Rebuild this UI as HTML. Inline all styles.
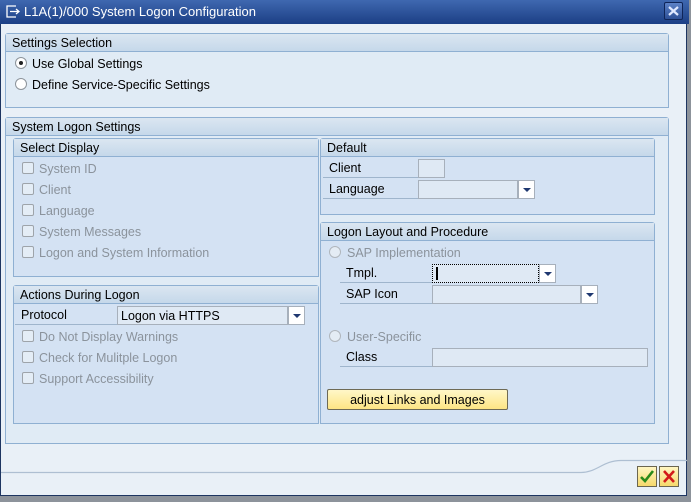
<!DOCTYPE html>
<html><head><meta charset="utf-8"><style>
*{margin:0;padding:0;box-sizing:border-box}
body{width:691px;height:502px;background:#8d939b;position:relative;overflow:hidden;font-family:"Liberation Sans",sans-serif;font-size:12.5px;color:#000}
.a{position:absolute}
#dlg{left:0;top:0;width:687px;height:496px;background:#e9f0f7;border:1px solid #1d3561;border-top:none}
#title{left:0;top:0;width:689px;height:24px;background:linear-gradient(#3f68b0,#1c3f85);color:#fff;font-size:13px;line-height:24px;padding-left:24px}
.grp{border:1px solid #8fb0d2;border-radius:3px 3px 0 0;background:#dde8f3}
.hd{left:0;top:0;right:0;height:18px;background:linear-gradient(#dbe6f1,#c5d8ea);border-bottom:1px solid #8fb0d2;line-height:18px;padding-left:6px;font-size:12.5px}
.inner{background:#d4e2f3}
.t{white-space:nowrap;line-height:14px}
.dis{color:#8b939c}
.cb{width:12px;height:12px;border:1px solid #9ea4aa;border-radius:2px;background:#e4edf6}
.rb{width:12px;height:12px;border:1px solid #8d949b;border-radius:50%;background:#fff}
.lbl{border-bottom:1px solid #9fb5cc;height:20px;line-height:21px;padding-left:6px}
.in{height:19px;border:1px solid #a7b0bb;background:#dfe9f4}
.dd{width:17px;height:19px;border:1px solid #a7b0bb;background:#fff}
.dd:after{content:"";position:absolute;left:4px;top:7px;border-left:4px solid transparent;border-right:4px solid transparent;border-top:4px solid #1f3870}
</style></head><body>
<div id="dlg" class="a"></div>
<div id="title" class="a">L1A(1)/000 System Logon Configuration</div>
<svg class="a" style="left:6px;top:5px" width="14" height="13"><path d="M10 1H1v11h9" fill="none" stroke="#fff" stroke-width="1.3"/><path d="M4 6.5h9M10 4l3 2.5-3 2.5" fill="none" stroke="#fff" stroke-width="1.3"/></svg>
<div class="a" style="left:664px;top:2px;width:19px;height:18px;border:1px solid #0f2558;border-radius:2px;background:linear-gradient(#5c82c7,#2c4f96)"><svg width="17" height="16"><path d="M4 4l9 8M13 4l-9 8" stroke="#dfe8ff" stroke-width="2.2"/></svg></div>

<div class="a grp" style="left:5px;top:33px;width:664px;height:75px;background:#e0ebf5"><div class="a hd">Settings Selection</div></div>
<div class="a rb" style="left:15px;top:57px"><div class="a" style="left:3px;top:3px;width:4px;height:4px;border-radius:50%;background:#222"></div></div>
<div class="a t" style="left:32px;top:57px">Use Global Settings</div>
<div class="a rb" style="left:15px;top:78px"></div>
<div class="a t" style="left:32px;top:78px">Define Service-Specific Settings</div>

<div class="a grp" style="left:5px;top:117px;width:664px;height:327px;background:#e0ebf5"><div class="a hd">System Logon Settings</div></div>

<div class="a grp inner" style="left:13px;top:138px;width:306px;height:139px"><div class="a hd">Select Display</div></div>
<div class="a cb" style="left:22px;top:162px"></div><div class="a t dis" style="left:39px;top:162px">System ID</div>
<div class="a cb" style="left:22px;top:183px"></div><div class="a t dis" style="left:39px;top:183px">Client</div>
<div class="a cb" style="left:22px;top:204px"></div><div class="a t dis" style="left:39px;top:204px">Language</div>
<div class="a cb" style="left:22px;top:225px"></div><div class="a t dis" style="left:39px;top:225px">System Messages</div>
<div class="a cb" style="left:22px;top:246px"></div><div class="a t dis" style="left:39px;top:246px">Logon and System Information</div>

<div class="a grp inner" style="left:320px;top:138px;width:335px;height:77px"><div class="a hd">Default</div></div>
<div class="a lbl" style="left:323px;top:158px;width:95px">Client</div>
<div class="a in" style="left:418px;top:159px;width:27px"></div>
<div class="a lbl" style="left:323px;top:179px;width:95px">Language</div>
<div class="a in" style="left:418px;top:180px;width:100px"></div>
<div class="a dd" style="left:518px;top:180px"></div>

<div class="a grp inner" style="left:13px;top:285px;width:306px;height:139px"><div class="a hd">Actions During Logon</div></div>
<div class="a lbl" style="left:15px;top:305px;width:102px">Protocol</div>
<div class="a in" style="left:117px;top:306px;width:171px;line-height:18px;padding-left:3px">Logon via HTTPS</div>
<div class="a dd" style="left:288px;top:306px"></div>
<div class="a cb" style="left:22px;top:330px"></div><div class="a t dis" style="left:39px;top:330px">Do Not Display Warnings</div>
<div class="a cb" style="left:22px;top:351px"></div><div class="a t dis" style="left:39px;top:351px">Check for Mulitple Logon</div>
<div class="a cb" style="left:22px;top:372px"></div><div class="a t dis" style="left:39px;top:372px">Support Accessibility</div>

<div class="a grp inner" style="left:320px;top:222px;width:335px;height:202px"><div class="a hd">Logon Layout and Procedure</div></div>
<div class="a rb" style="left:329px;top:246px;border-color:#b0b6bc;background:#e4ecf4"></div>
<div class="a t dis" style="left:347px;top:246px">SAP Implementation</div>
<div class="a lbl" style="left:340px;top:263px;width:92px">Tmpl.</div>
<div class="a in" style="left:432px;top:264px;width:107px;border:1px dotted #000"><div class="a" style="left:3px;top:2px;width:2px;height:13px;background:#000"></div></div>
<div class="a dd" style="left:539px;top:264px"></div>
<div class="a lbl" style="left:340px;top:284px;width:92px">SAP Icon</div>
<div class="a in" style="left:432px;top:285px;width:149px"></div>
<div class="a dd" style="left:581px;top:285px"></div>
<div class="a rb" style="left:329px;top:330px;border-color:#b0b6bc;background:#e4ecf4"></div>
<div class="a t dis" style="left:347px;top:330px">User-Specific</div>
<div class="a lbl" style="left:340px;top:347px;width:92px">Class</div>
<div class="a in" style="left:432px;top:348px;width:216px"></div>
<div class="a" style="left:327px;top:389px;width:181px;height:21px;border:1px solid #6e6a55;border-radius:2px;background:linear-gradient(#fff7c8,#fde584);text-align:center;line-height:20px">adjust Links and Images</div>

<svg class="a" style="left:1px;top:455px" width="686" height="20"><path d="M0 17.5H580 C596 17.5 602 5.5 620 5.5H686" fill="none" stroke="#aebfd2" stroke-width="1.2"/></svg>
<div class="a" style="left:637px;top:466px;width:20px;height:21px;border:1px solid #6b6650;background:linear-gradient(#fff6c2,#f6d96c)"><svg width="18" height="19"><path d="M3 10l4 4 8-10" fill="none" stroke="#2a8a1a" stroke-width="2.6"/></svg></div>
<div class="a" style="left:659px;top:466px;width:20px;height:21px;border:1px solid #6b6650;background:linear-gradient(#fff6c2,#f6d96c)"><svg width="18" height="19"><path d="M4 4l10 11M14 4L4 15" stroke="#d21a1a" stroke-width="2.6"/></svg></div>
</body></html>
